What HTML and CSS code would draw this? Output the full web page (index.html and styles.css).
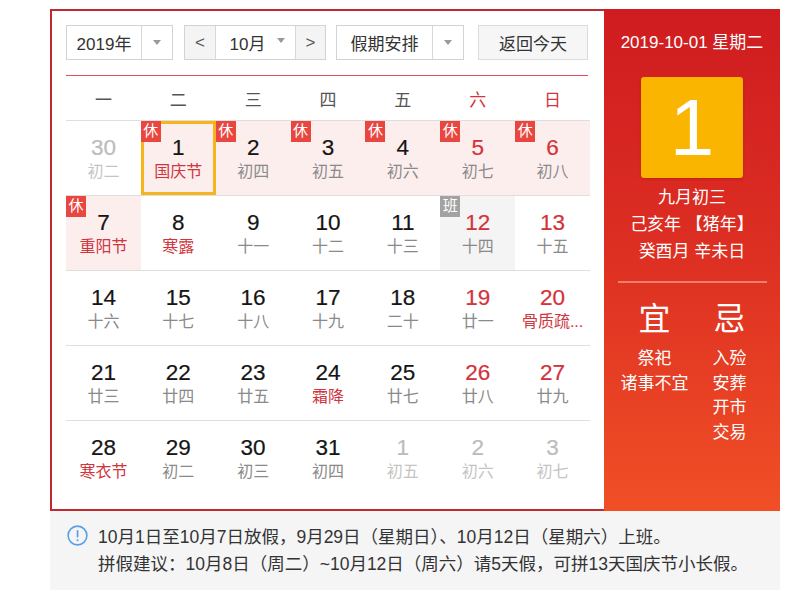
FILE: index.html
```html
<!DOCTYPE html>
<html lang="zh-CN">
<head>
<meta charset="utf-8">
<title>万年历</title>
<link rel="stylesheet" href="styles.css">
</head>
<body>
<div class="wrap">
  <div class="cal">
    <div class="main">
      <div class="toolbar">
        <div class="box year">
          <span class="box-text">2019年</span>
          <span class="box-arrow"><i class="tri"></i></span>
        </div>
        <div class="box month">
          <span class="nav">&lt;</span>
          <span class="month-text">10月<i class="tri tri-inline"></i></span>
          <span class="nav nav-r">&gt;</span>
        </div>
        <div class="box holiday">
          <span class="box-text">假期安排</span>
          <span class="box-arrow"><i class="tri"></i></span>
        </div>
        <div class="box today">返回今天</div>
      </div>
      <div class="weekhead">
        <span>一</span><span>二</span><span>三</span><span>四</span><span>五</span><span class="we">六</span><span class="we">日</span>
      </div>
      <div class="grid">
        <div class="row">
          <div class="cell other"><b class="num">30</b><span class="lunar">初二</span></div>
          <div class="cell hol sel fest"><i class="badge">休</i><b class="num">1</b><span class="lunar">国庆节</span></div>
          <div class="cell hol"><i class="badge">休</i><b class="num">2</b><span class="lunar">初四</span></div>
          <div class="cell hol"><i class="badge">休</i><b class="num">3</b><span class="lunar">初五</span></div>
          <div class="cell hol"><i class="badge">休</i><b class="num">4</b><span class="lunar">初六</span></div>
          <div class="cell hol wk"><i class="badge">休</i><b class="num">5</b><span class="lunar">初七</span></div>
          <div class="cell hol wk"><i class="badge">休</i><b class="num">6</b><span class="lunar">初八</span></div>
        </div>
        <div class="row">
          <div class="cell hol fest"><i class="badge">休</i><b class="num">7</b><span class="lunar">重阳节</span></div>
          <div class="cell fest"><b class="num">8</b><span class="lunar">寒露</span></div>
          <div class="cell"><b class="num">9</b><span class="lunar">十一</span></div>
          <div class="cell"><b class="num">10</b><span class="lunar">十二</span></div>
          <div class="cell"><b class="num">11</b><span class="lunar">十三</span></div>
          <div class="cell work wk"><i class="badge badge-work">班</i><b class="num">12</b><span class="lunar">十四</span></div>
          <div class="cell wk"><b class="num">13</b><span class="lunar">十五</span></div>
        </div>
        <div class="row">
          <div class="cell"><b class="num">14</b><span class="lunar">十六</span></div>
          <div class="cell"><b class="num">15</b><span class="lunar">十七</span></div>
          <div class="cell"><b class="num">16</b><span class="lunar">十八</span></div>
          <div class="cell"><b class="num">17</b><span class="lunar">十九</span></div>
          <div class="cell"><b class="num">18</b><span class="lunar">二十</span></div>
          <div class="cell wk"><b class="num">19</b><span class="lunar">廿一</span></div>
          <div class="cell wk fest"><b class="num">20</b><span class="lunar">骨质疏...</span></div>
        </div>
        <div class="row">
          <div class="cell"><b class="num">21</b><span class="lunar">廿三</span></div>
          <div class="cell"><b class="num">22</b><span class="lunar">廿四</span></div>
          <div class="cell"><b class="num">23</b><span class="lunar">廿五</span></div>
          <div class="cell fest"><b class="num">24</b><span class="lunar">霜降</span></div>
          <div class="cell"><b class="num">25</b><span class="lunar">廿七</span></div>
          <div class="cell wk"><b class="num">26</b><span class="lunar">廿八</span></div>
          <div class="cell wk"><b class="num">27</b><span class="lunar">廿九</span></div>
        </div>
        <div class="row">
          <div class="cell fest"><b class="num">28</b><span class="lunar">寒衣节</span></div>
          <div class="cell"><b class="num">29</b><span class="lunar">初二</span></div>
          <div class="cell"><b class="num">30</b><span class="lunar">初三</span></div>
          <div class="cell"><b class="num">31</b><span class="lunar">初四</span></div>
          <div class="cell other"><b class="num">1</b><span class="lunar">初五</span></div>
          <div class="cell other"><b class="num">2</b><span class="lunar">初六</span></div>
          <div class="cell other"><b class="num">3</b><span class="lunar">初七</span></div>
        </div>
      </div>
    </div>
    <div class="side">
      <div class="side-date">2019-10-01 星期二</div>
      <div class="big-day">1</div>
      <div class="side-lunar">
        <div>九月初三</div>
        <div>己亥年&nbsp;【猪年】</div>
        <div>癸酉月 辛未日</div>
      </div>
      <div class="side-line"></div>
      <div class="yiji">
        <div class="yj-col">
          <div class="yj-title">宜</div>
          <div>祭祀</div>
          <div>诸事不宜</div>
        </div>
        <div class="yj-col">
          <div class="yj-title">忌</div>
          <div>入殓</div>
          <div>安葬</div>
          <div>开市</div>
          <div>交易</div>
        </div>
      </div>
    </div>
  </div>
  <div class="info">
    <svg class="info-icon" width="21" height="21" viewBox="0 0 21 21">
      <circle cx="10.5" cy="10.5" r="9.4" fill="none" stroke="#5a9fe4" stroke-width="1.6"/>
      <rect x="9.7" y="5" width="1.7" height="7.5" rx="0.8" fill="#5a9fe4"/>
      <circle cx="10.55" cy="15.2" r="1.05" fill="#5a9fe4"/>
    </svg>
    <div class="info-text">
      <p>10月1日至10月7日放假，9月29日（星期日）、10月12日（星期六）上班。</p>
      <p>拼假建议：10月8日（周二）~10月12日（周六）请5天假，可拼13天国庆节小长假。</p>
    </div>
  </div>
</div>
</body>
</html>
```

FILE: styles.css
```css
* { box-sizing: border-box; }
html, body { margin: 0; padding: 0; background: #fff; }
body {
  font-family: "Liberation Sans", "Noto Sans CJK SC", sans-serif;
  color: #333;
}
.wrap {
  width: 730px;
  margin: 9px 0 0 50px;
}
.cal {
  display: flex;
  height: 502px;
}
.main {
  width: 554px;
  border: 2px solid #bf2a30;
  border-right: none;
  padding: 14px 12px 14px 14px;
}
.toolbar {
  display: flex;
  height: 35px;
  width: 522px;
}
.box {
  display: flex;
  height: 35px;
  border: 1px solid #d3d3d3;
  background: #fff;
  font-size: 17px;
  color: #333;
  align-items: stretch;
}
.year { width: 107px; margin-right: 11px; }
.month { width: 142px; margin-right: 10px; }
.holiday { width: 128px; margin-right: 14px; }
.today {
  width: 110px;
  background: #f6f6f6;
  border-color: #dcdcdc;
  justify-content: center;
  align-items: center;
}
.box-text {
  flex: 1;
  display: flex;
  align-items: center;
  justify-content: center;
}
.box-arrow {
  width: 31px;
  border-left: 1px solid #d8d8d8;
  display: flex;
  align-items: center;
  justify-content: center;
}
.tri {
  display: inline-block;
  width: 0; height: 0;
  border-left: 4.5px solid transparent;
  border-right: 4.5px solid transparent;
  border-top: 5px solid #9a9a9a;
}
.tri-inline { margin-left: 12px; position: relative; top: -2px; }
.nav {
  width: 31px;
  background: #f4f4f4;
  border-right: 1px solid #d8d8d8;
  display: flex;
  align-items: center;
  justify-content: center;
  color: #555;
  font-size: 17px;
}
.nav-r { border-right: none; border-left: 1px solid #d8d8d8; width: 30px; }
.month-text {
  flex: 1;
  display: flex;
  align-items: center;
  justify-content: center;
  padding-left: 4px;
}
.weekhead {
  margin-top: 15px;
  width: 522px;
  border-top: 1px solid #e0505a;
  height: 45px;
  display: grid;
  grid-template-columns: repeat(7, 74.86px);
  align-items: center;
  font-size: 17px;
  color: #555;
}
.weekhead span { text-align: center; }
.weekhead .we { color: #d4343c; }
.grid { width: 524px; }
.row {
  display: grid;
  grid-template-columns: repeat(7, 1fr);
  height: 75px;
  border-top: 1px solid #dedede;
}
.cell {
  position: relative;
  display: flex;
  flex-direction: column;
  align-items: center;
  padding-top: 14px;
}
.num {
  font-weight: normal;
  font-size: 22.5px;
  line-height: 26px;
  color: #151515;
  -webkit-text-stroke: 0.2px currentColor;
}
.lunar {
  font-size: 16px;
  line-height: 22px;
  color: #8a8a8a;
  white-space: nowrap;
}
.wk .num { color: #d4323b; }
.fest .lunar { color: #d0343d; }
.other .num { color: #bcbcbc; }
.other .lunar { color: #c4c4c4; }
.hol { background: #fdeeee; }
.work { background: #f4f4f4; }
.sel { border: 3px solid #f6b51c; padding-top: 11px; }
.sel .badge { top: -3px; left: -3px; }
.badge {
  position: absolute;
  top: 0;
  left: 0;
  width: 20px;
  height: 21px;
  background: #e9463f;
  color: #fff;
  font-style: normal;
  font-size: 15px;
  line-height: 20px;
  text-align: center;
}
.badge-work { background: #a2a2a2; }
.side {
  width: 176px;
  background: linear-gradient(180deg, #cf1c20 0%, #dc2d22 45%, #f04f26 100%);
  color: #fff;
  display: flex;
  flex-direction: column;
  align-items: center;
  padding-top: 22px;
}
.side-date {
  font-size: 17px;
  line-height: 24px;
}
.big-day {
  margin-top: 22px;
  width: 102px;
  height: 101px;
  background: #f9b500;
  border-radius: 3px;
  box-shadow: 0 1px 3px rgba(120, 0, 0, 0.25);
  font-size: 80px;
  line-height: 101px;
  text-align: center;
}
.side-lunar {
  margin-top: 6px;
  font-size: 17px;
  line-height: 27px;
  text-align: center;
}
.side-line {
  margin-top: 16px;
  width: 149px;
  height: 2px;
  background: rgba(255, 190, 170, 0.55);
}
.yiji {
  display: flex;
  width: 150px;
  margin-top: 16px;
}
.yj-col {
  width: 75px;
  display: flex;
  flex-direction: column;
  align-items: center;
  font-size: 17px;
  line-height: 24.5px;
}
.yj-title {
  font-size: 32px;
  line-height: 40px;
  margin-bottom: 8px;
}
.info {
  background: #f5f5f6;
  height: 90px;
  display: flex;
  align-items: flex-start;
  padding: 13px 0 0 17px;
}
.info-icon { margin-top: 1px; flex: none; }
.info-text {
  margin-left: 10px;
  font-size: 17.5px;
  line-height: 27px;
  color: #333;
}
.info-text p { margin: 0; white-space: nowrap; }
```
